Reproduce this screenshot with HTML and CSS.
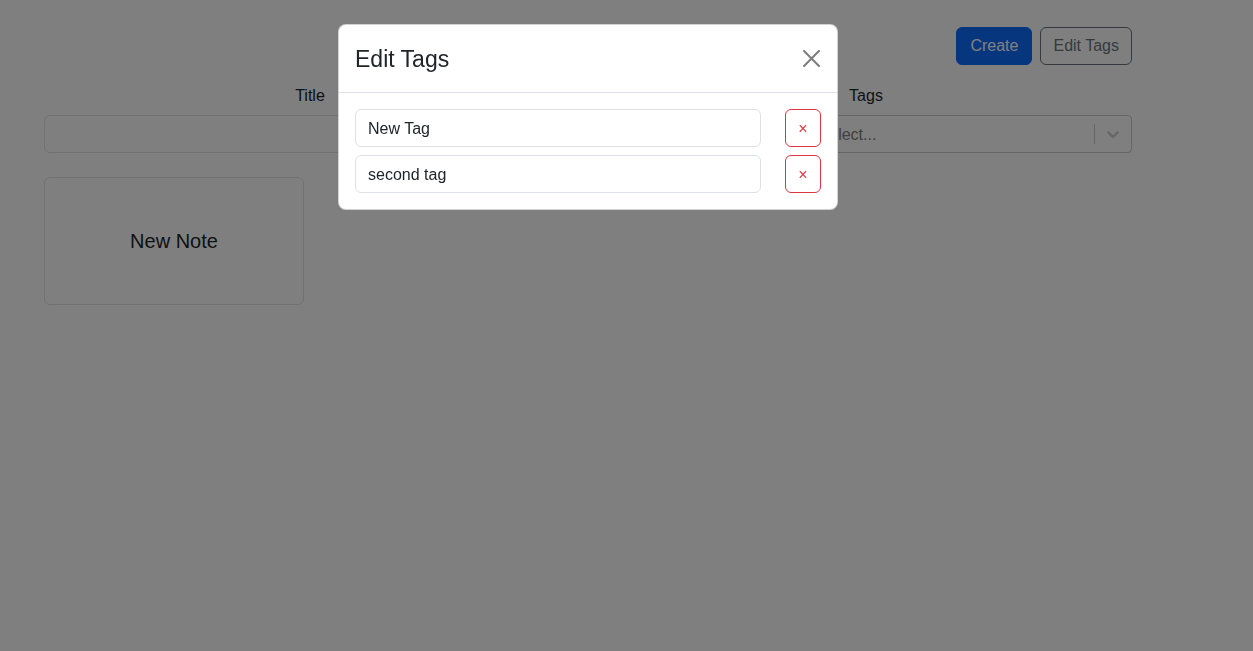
FILE: index.html
```html
<!DOCTYPE html>
<html lang="en">
<head>
<meta charset="utf-8">
<title>Notes</title>
<link rel="stylesheet" href="styles.css">
</head>
<body>
<div class="page">
  <div class="toolbar">
    <button class="btn btn-primary">Create</button>
    <button class="btn btn-outline-secondary">Edit Tags</button>
  </div>
  <form class="filters">
    <div class="field">
      <label class="form-label">Title</label>
      <input class="form-control" type="text">
    </div>
    <div class="field">
      <label class="form-label">Tags</label>
      <div class="select">
        <div class="select-value"><span class="select-placeholder">Select...</span></div>
        <span class="select-sep"></span>
        <span class="select-indicator">
          <svg viewBox="0 0 20 20" width="20" height="20"><path fill="currentColor" d="M4.516 7.548c0.436-0.446 1.043-0.481 1.576 0l3.908 3.747 3.908-3.747c0.533-0.481 1.141-0.446 1.574 0 0.436 0.445 0.408 1.197 0 1.615-0.406 0.418-4.695 4.502-4.695 4.502-0.217 0.223-0.502 0.335-0.787 0.335s-0.57-0.112-0.789-0.335c0 0-4.287-4.084-4.695-4.502s-0.436-1.170 0-1.615z"/></svg>
        </span>
      </div>
    </div>
  </form>
  <div class="notes">
    <div class="note-card">New Note</div>
  </div>
</div>

<div class="backdrop"></div>

<div class="modal">
  <div class="modal-header">
    <div class="modal-title">Edit Tags</div>
    <button class="btn-close" aria-label="Close">
      <svg viewBox="0 0 16 16" width="17" height="17"><path fill="currentColor" d="M.293.293a1 1 0 0 1 1.414 0L8 6.586 14.293.293a1 1 0 1 1 1.414 1.414L9.414 8l6.293 6.293a1 1 0 0 1-1.414 1.414L8 9.414l-6.293 6.293a1 1 0 0 1-1.414-1.414L6.586 8 .293 1.707a1 1 0 0 1 0-1.414z"/></svg>
    </button>
  </div>
  <div class="modal-body">
    <div class="tag-row">
      <input class="form-control" type="text" value="New Tag">
      <button class="btn btn-outline-danger">&times;</button>
    </div>
    <div class="tag-row">
      <input class="form-control" type="text" value="second tag">
      <button class="btn btn-outline-danger">&times;</button>
    </div>
  </div>
</div>
</body>
</html>
```

FILE: styles.css
```css
* { box-sizing: border-box; }

html, body {
  margin: 0;
  height: 100%;
  background: #ffffff;
}

body {
  font-family: "Liberation Sans", Arial, sans-serif;
  font-size: 16px;
  line-height: 1.5;
  color: #212529;
  text-align: center;
}

.page {
  width: 1088px;
  margin-left: 44px;
  padding-top: 27px;
}

.toolbar {
  display: flex;
  justify-content: flex-end;
  gap: 8px;
}

.btn {
  font-family: inherit;
  font-size: 16px;
  line-height: 24px;
  padding: 6px 12px;
  border: 1px solid transparent;
  border-radius: 6px;
  background: transparent;
  cursor: pointer;
}

.btn-primary {
  background: #0d6efd;
  border-color: #0d6efd;
  color: #ffffff;
  padding: 6px 13px;
}

.btn-outline-secondary {
  border-color: #6c757d;
  color: #6c757d;
}

.btn-outline-danger {
  border-color: #dc3545;
  color: #dc3545;
}

.filters {
  margin-top: 18px;
  display: grid;
  grid-template-columns: 1fr 1fr;
  column-gap: 24px;
}

.form-label {
  display: block;
  line-height: 24px;
  margin-bottom: 8px;
  padding-top: 1px;
  height: 24px;
}

.form-control {
  display: block;
  width: 100%;
  height: 38px;
  padding: 7px 12px 5px;
  font-family: inherit;
  font-size: 16px;
  line-height: 24px;
  color: #212529;
  text-align: left;
  background: #ffffff;
  border: 1px solid #dee2e6;
  border-radius: 6px;
}

.select {
  display: flex;
  align-items: stretch;
  height: 38px;
  border: 1px solid #cccccc;
  border-radius: 4px;
  background: #ffffff;
}

.select-value {
  flex: 1;
  display: flex;
  align-items: center;
  justify-content: center;
  padding: 3px 8px 1px;
}

.select-placeholder {
  color: #808080;
}

.select-sep {
  width: 1px;
  margin: 8px 0;
  background: #cccccc;
}

.select-indicator {
  display: flex;
  align-items: center;
  padding: 8px;
  color: #cccccc;
}

.notes {
  margin-top: 24px;
  display: flex;
}

.note-card {
  width: 260px;
  height: 128px;
  display: flex;
  align-items: center;
  justify-content: center;
  border: 1px solid #dee2e6;
  border-radius: 6px;
  font-size: 20px;
}

.backdrop {
  position: fixed;
  inset: 0;
  background: rgba(0, 0, 0, 0.5);
}

.modal {
  position: fixed;
  left: 338px;
  top: 24px;
  width: 500px;
  background: #ffffff;
  border: 1px solid rgba(0, 0, 0, 0.175);
  border-radius: 8px;
  text-align: left;
}

.modal-header {
  display: flex;
  align-items: center;
  justify-content: space-between;
  padding: 16px 16px 15px;
  border-bottom: 1px solid #dee2e6;
}

.modal-title {
  font-size: 23px;
  line-height: 36px;
}

.btn-close {
  display: flex;
  align-items: center;
  justify-content: center;
  width: 25px;
  height: 25px;
  padding: 0;
  margin-right: -3px;
  margin-top: -2px;
  border: 0;
  background: transparent;
  color: #000000;
  opacity: 0.5;
  cursor: pointer;
}

.modal-body {
  padding: 16px;
  display: flex;
  flex-direction: column;
  gap: 8px;
}

.tag-row {
  display: flex;
  gap: 24px;
}

.tag-row .form-control {
  flex: 1;
}

.tag-row .btn {
  width: 36px;
  padding: 7px 0 5px;
  text-align: center;
}
```
